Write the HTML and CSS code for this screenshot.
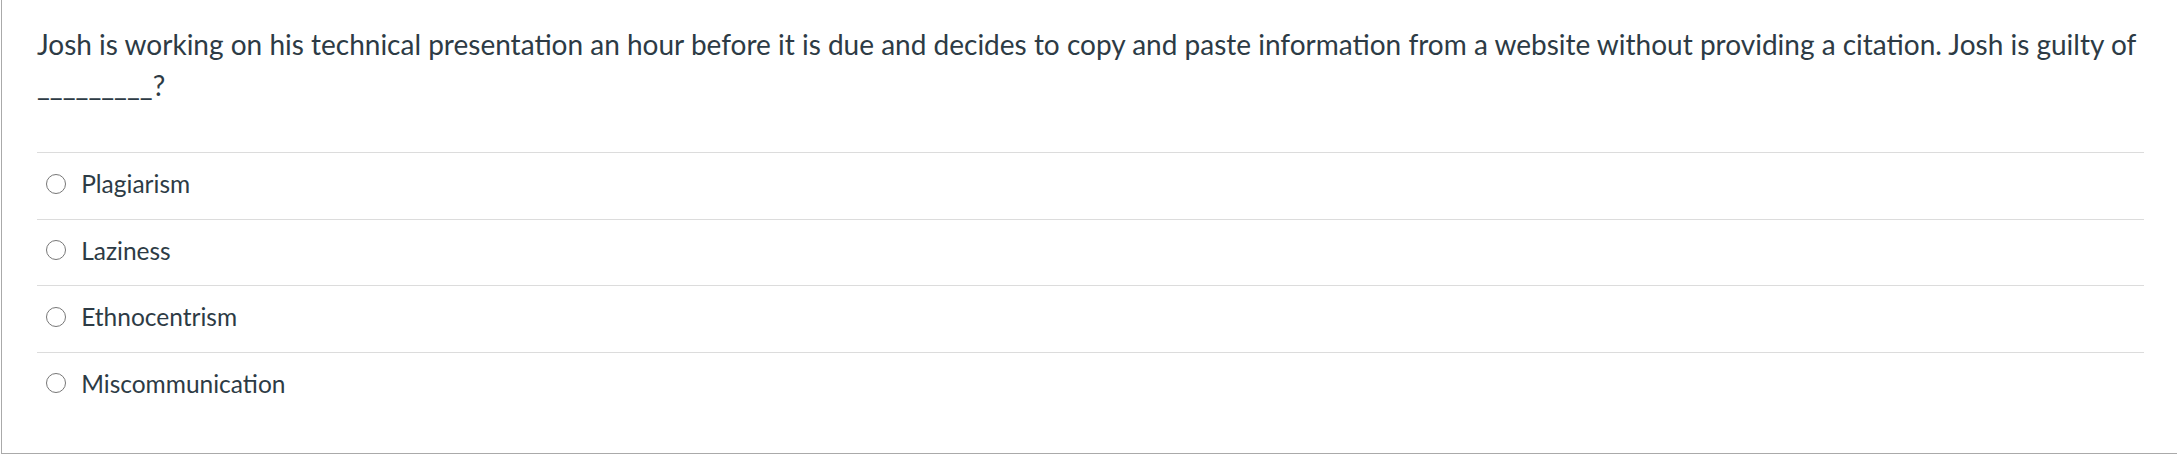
FILE: index.html
```html
<!DOCTYPE html>
<html>
<head>
<meta charset="utf-8">
<link rel="stylesheet" href="styles.css">
</head>
<body>
<div class="question">
  <div class="question-text">Josh is working on his technical presentation an hour before it is due and decides to copy and paste information from a website without providing a citation. Josh is guilty of _________?</div>
  <div class="answers">
    <label class="answer"><span class="radio"></span><span class="label">Plagiarism</span></label>
    <label class="answer"><span class="radio"></span><span class="label">Laziness</span></label>
    <label class="answer"><span class="radio"></span><span class="label">Ethnocentrism</span></label>
    <label class="answer"><span class="radio"></span><span class="label">Miscommunication</span></label>
  </div>
</div>
</body>
</html>
```
FILE: styles.css
```css
html, body {
  margin: 0;
  padding: 0;
  background: #ffffff;
}
body {
  font-family: Lato, "Open Sans", sans-serif;
  color: #2d3b45;
}
.question {
  margin-left: 1px;
  border-left: 1px solid #aaaaaa;
  border-bottom: 1px solid #aaaaaa;
  padding: 24px 33px 35px 35px;
  height: 454px;
  box-sizing: border-box;
}
.question-text {
  font-size: 28px;
  line-height: 41px;
  margin-bottom: 46px;
}
.answers {
  display: flex;
  flex-direction: column;
}
.answer {
  display: flex;
  align-items: center;
  height: 66.5px;
  box-sizing: border-box;
  border-top: 1px solid #dcdcdc;
  padding-bottom: 4px;
}
.radio {
  width: 18.4px;
  height: 18.4px;
  border: 1.7px solid #777777;
  border-radius: 50%;
  margin-left: 9px;
  margin-right: 14.8px;
  flex: none;
}
.label {
  font-size: 24.5px;
}
```
